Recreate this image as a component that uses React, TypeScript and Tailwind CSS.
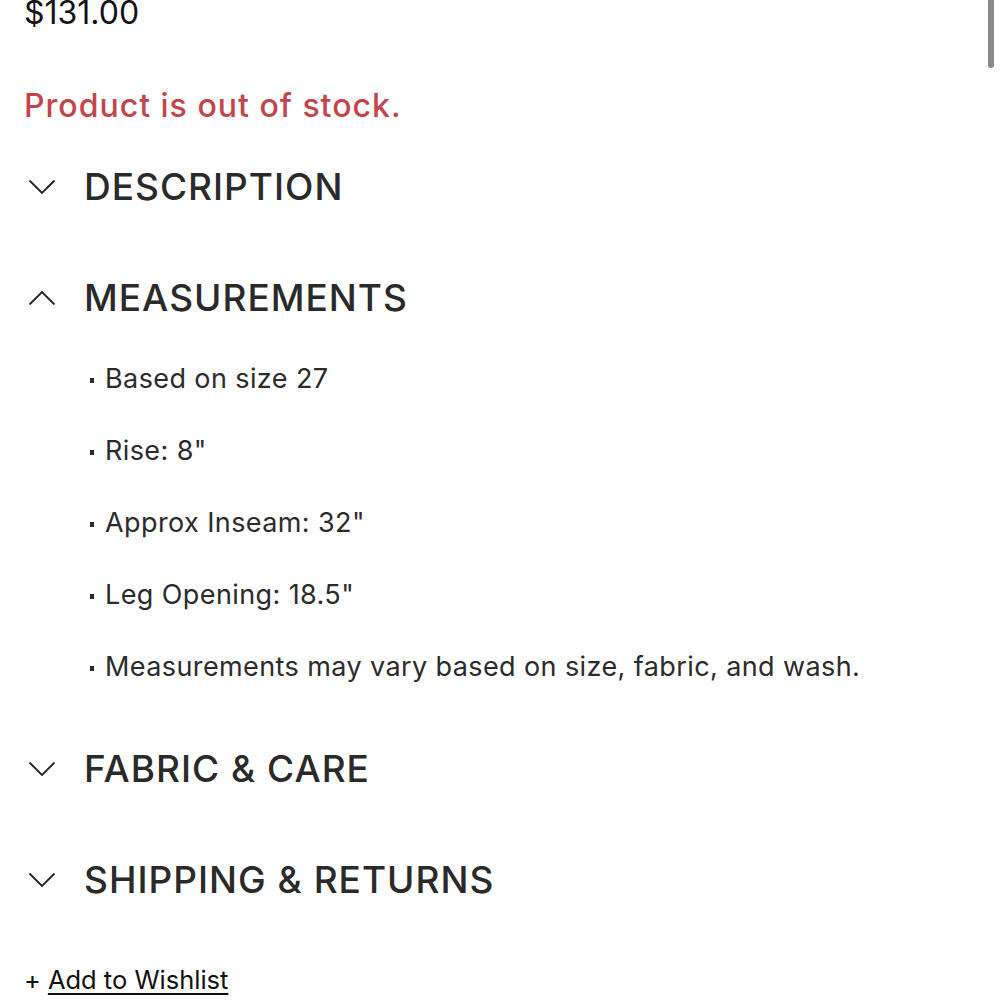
import React, { useState } from "react";

const sections = [
  { id: "description", title: "DESCRIPTION", items: [] as string[] },
  {
    id: "measurements",
    title: "MEASUREMENTS",
    items: [
      "Based on size 27",
      'Rise: 8"',
      'Approx Inseam: 32"',
      'Leg Opening: 18.5"',
      "Measurements may vary based on size, fabric, and wash.",
    ],
  },
  { id: "fabric", title: "FABRIC & CARE", items: [] as string[] },
  { id: "shipping", title: "SHIPPING & RETURNS", items: [] as string[] },
];

function Chevron({ open }: { open: boolean }) {
  return (
    <svg width="28" height="16" viewBox="0 0 28 16" fill="none" className="shrink-0">
      {open ? (
        <path d="M1.5 14.5 L14 2 L26.5 14.5" stroke="#222" strokeWidth="1.8" />
      ) : (
        <path d="M1.5 1.5 L14 14 L26.5 1.5" stroke="#222" strokeWidth="1.8" />
      )}
    </svg>
  );
}

export default function App() {
  const [open, setOpen] = useState<string[]>(["measurements"]);

  const toggle = (id: string) =>
    setOpen((prev) => (prev.includes(id) ? prev.filter((x) => x !== id) : [...prev, id]));

  return (
    <div
      className="relative h-[1000px] overflow-hidden bg-white px-6"
      style={{ fontFamily: "Inter, 'Noto Sans', sans-serif" }}
    >
      {/* scrollbar */}
      <div className="absolute right-[6px] top-[-4px] h-[72px] w-[6px] rounded-full bg-[#8a8a8a]" />

      <div className="-mt-[5px] text-[32px] leading-[36px] text-[#111]">$131.00</div>

      <div className="mt-[57px] text-[32px] font-medium leading-[36px] tracking-[1px] text-[#c5444c]">
        Product is out of stock.
      </div>

      <div className="mt-[27px]">
        {sections.map((s) => {
          const isOpen = open.includes(s.id);
          return (
            <div key={s.id} className="mb-[39px]">
              <button
                onClick={() => toggle(s.id)}
                className="flex h-[72px] w-full items-center gap-[28px] pl-[4px] text-left"
              >
                <Chevron open={isOpen} />
                <span className="text-[37px] font-medium leading-[40px] tracking-[1px] text-[#2a2a2a]">
                  {s.title}
                </span>
              </button>
              {isOpen && s.items.length > 0 && (
                <ul className="mt-[9px] -mb-[9px] pl-[66px]">
                  {s.items.map((item) => (
                    <li
                      key={item}
                      className="flex h-[72px] items-center gap-[11px] text-[27px] tracking-[0.4px] text-[#2b2b2b]"
                    >
                      <span className="mt-[3px] h-[5px] w-[4px] shrink-0 bg-[#2b2b2b]" />
                      <span>{item}</span>
                    </li>
                  ))}
                </ul>
              )}
            </div>
          );
        })}
      </div>

      <div className="mt-[46px] flex items-center text-[25.5px] leading-[36px] text-[#111]">
        <span className="mr-[7px]">+</span>
        <a href="#" className="underline decoration-[2px] underline-offset-[4px]">
          Add to Wishlist
        </a>
      </div>
    </div>
  );
}
